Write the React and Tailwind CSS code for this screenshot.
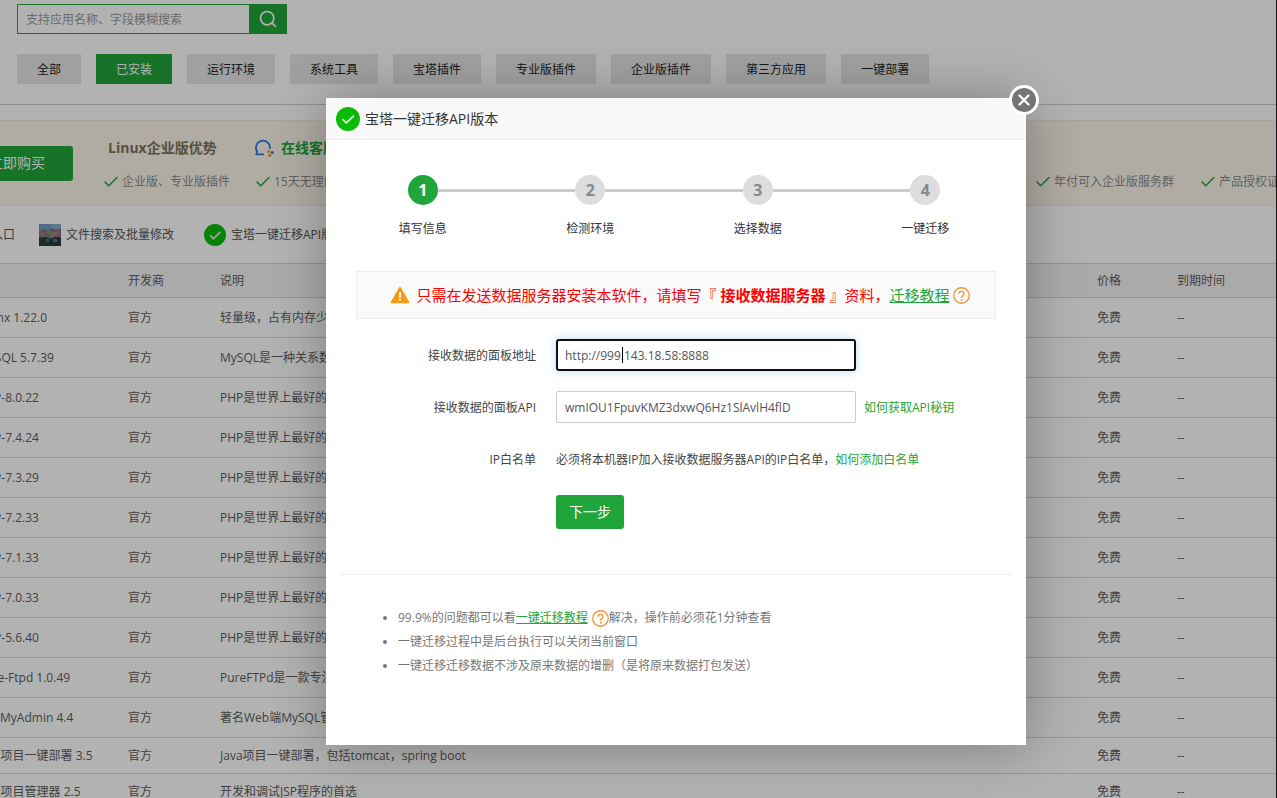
import { Check, Search, X } from "lucide-react";

const tabs = [
  "全部",
  "已安装",
  "运行环境",
  "系统工具",
  "宝塔插件",
  "专业版插件",
  "企业版插件",
  "第三方应用",
  "一键部署",
];

const php = "PHP是世界上最好的编程语言";

const apps = [
  { name: "Nginx 1.22.0", desc: "轻量级，占有内存少，并发能力强" },
  { name: "MySQL 5.7.39", desc: "MySQL是一种关系数据库管理系统" },
  { name: "PHP-8.0.22", desc: php },
  { name: "PHP-7.4.24", desc: php },
  { name: "PHP-7.3.29", desc: php },
  { name: "PHP-7.2.33", desc: php },
  { name: "PHP-7.1.33", desc: php },
  { name: "PHP-7.0.33", desc: php },
  { name: "PHP-5.6.40", desc: php },
  { name: "Pure-Ftpd 1.0.49", desc: "PureFTPd是一款专注于程序健壮的软件" },
  { name: "phpMyAdmin 4.4", desc: "著名Web端MySQL管理工具" },
  { name: "Java项目一键部署 3.5", desc: "Java项目一键部署，包括tomcat，spring boot", compact: true },
  { name: "Java项目管理器 2.5", desc: "开发和调试JSP程序的首选", compact: true },
];

const steps = ["填写信息", "检测环境", "选择数据", "一键迁移"];

function GreenCheck({ className }) {
  return (
    <svg viewBox="0 0 24 24" className={className} aria-hidden="true">
      <circle cx="12" cy="12" r="12" fill="#09bb07" />
      <path d="M6.500 12.200l3.800 3.800 7.600-7.400" fill="none" stroke="#d5f3d5" strokeWidth="1.9" />
    </svg>
  );
}

function PhotoIcon() {
  return (
    <svg viewBox="0 0 22 22" className="size-[22px] shrink-0" aria-hidden="true">
      <rect width="22" height="22" fill="#4a6272" />
      <rect width="22" height="7" fill="#6f9cc4" />
      <rect x="12" width="10" height="5" fill="#86add0" />
      <path d="M0 7l5-2 4 2 3-3 5 2 5-2v9H0z" fill="#7d7088" />
      <rect x="1" y="8" width="5" height="3" fill="#a0787c" />
      <rect x="8" y="7" width="4" height="3" fill="#71a46a" />
      <rect x="13" y="8" width="5" height="3" fill="#b08a6c" />
      <rect x="18" y="6" width="3" height="5" fill="#a3719a" />
      <rect x="3" y="11" width="4" height="3" fill="#6a8a90" />
      <rect x="11" y="11" width="4" height="3" fill="#86995c" />
      <path d="M0 14l6-1 5 2 5-2 6 1v8H0z" fill="#2a3c3a" />
      <rect x="7" y="15" width="3" height="3" fill="#4c6f68" />
      <rect x="14" y="15" width="4" height="3" fill="#53708c" />
    </svg>
  );
}

function ServiceIcon() {
  return (
    <svg viewBox="0 0 20 18" className="h-[18px] w-5 shrink-0" aria-hidden="true">
      <path
        d="M10 15.4H2.2l1-2.6A7 7 0 1 1 15.8 10"
        fill="none"
        stroke="#2a7de1"
        strokeWidth="1.7"
        strokeLinejoin="round"
      />
      <circle cx="14.6" cy="12.600" r="1.500" fill="#f0a020" />
      <circle cx="18.200" cy="13.400" r="1.500" fill="#2a7de1" />
      <circle cx="15.800" cy="16.200" r="1.500" fill="#f08a24" />
    </svg>
  );
}

function WarningIcon() {
  return (
    <svg viewBox="0 0 20 18" className="mr-[7px] h-[18px] w-5 shrink-0" aria-hidden="true">
      <path
        d="M10 1.6L18.6 16.4H1.4z"
        fill="#f39c12"
        stroke="#f39c12"
        strokeWidth="1.6"
        strokeLinejoin="round"
      />
      <path d="M10 6.400v5" stroke="#fff" strokeWidth="2" />
      <circle cx="10" cy="13.900" r="1.100" fill="#fff" />
    </svg>
  );
}

function HelpIcon({ className }) {
  return (
    <svg viewBox="0 0 16 16" className={className} aria-hidden="true">
      <circle cx="8" cy="8" r="7.3" fill="none" stroke="#f59331" strokeWidth="1.2" />
      <path
        d="M5.700 6.400a2.300 2.300 0 1 1 3.500 2C8.400 8.900 8 9.300 8 10.100"
        fill="none"
        stroke="#f59331"
        strokeWidth="1.3"
      />
      <circle cx="8" cy="12" r="0.9" fill="#f59331" />
    </svg>
  );
}

function Feature({ children }) {
  return (
    <span className="-ml-[3px] flex items-center gap-0.5 text-xs whitespace-nowrap text-[#8a8a8a]">
      <Check className="size-[18px] text-[#20a53a]" strokeWidth={2} />
      {children}
    </span>
  );
}

function StorePage() {
  return (
    <div>
      <div className="border-b border-[#ccc] px-[17px] pt-1 pb-5">
        <form className="flex h-[30px]" onSubmit={(e) => e.preventDefault()}>
          <input
            type="text"
            aria-label="搜索应用"
            placeholder="支持应用名称、字段模糊搜索"
            className="w-[232px] border border-r-0 border-[#20a53a] bg-white px-2 pt-px text-xs placeholder:text-[#999]"
          />
          <button
            type="submit"
            aria-label="搜索"
            className="grid w-[38px] place-items-center bg-[#20a53a] text-white"
          >
            <Search size={20} strokeWidth={2} />
          </button>
        </form>

        <div className="mt-5 flex gap-[15px]">
          {tabs.map((tab) => (
            <button
              key={tab}
              type="button"
              className={`h-[30px] shrink-0 px-5 pt-0.5 text-xs ${
                tab === "已安装" ? "bg-[#20a53a] text-white" : "bg-[#e6e6e6] text-[#222]"
              }`}
            >
              {tab}
            </button>
          ))}
        </div>
      </div>

      <div className="mt-[15px] flex h-[86px] items-center overflow-hidden border-y border-[#f2ebdc] bg-[#fcf7eb]">
        <button
          type="button"
          className="-ml-[39px] h-[35px] w-28 shrink-0 rounded-[3px] bg-[#20a53a] text-sm text-white"
        >
          立即购买
        </button>
        <div className="mt-[3px] ml-8 grid grid-cols-[152px_auto] gap-y-[15px]">
          <span className="pl-[3px] text-sm/5 font-bold text-[#80715a]">Linux企业版优势</span>
          <a
            href="#service"
            className="-ml-[3px] flex items-center gap-[7px] text-sm/5 font-bold whitespace-nowrap text-[#20a53a]"
          >
            <ServiceIcon />
            在线客服
          </a>
          <Feature>企业版、专业版插件</Feature>
          <Feature>15天无理由退款</Feature>
        </div>
        <div className="mt-[38px] ml-auto flex w-[239px] shrink-0 gap-7">
          <Feature>年付可入企业版服务群</Feature>
          <Feature>产品授权证书</Feature>
        </div>
      </div>

      <div className="-ml-[9px] flex h-[57px] items-center text-xs text-[#555]">
        <a href="#entry" className="mr-6">入口</a>
        <a href="#search" className="mr-[30px] flex items-center gap-[5px]">
          <PhotoIcon />
          文件搜索及批量修改
        </a>
        <a href="#migrate" className="flex items-center gap-[5px]">
          <GreenCheck className="size-[22px]" />
          宝塔一键迁移API版本
        </a>
      </div>

      <div className="-ml-[33px]">
        <table className="w-full table-fixed border-t border-[#d5d5d5] text-left text-xs text-[#5c5c5c]">
          <colgroup>
            <col className="w-[153px]" />
            <col className="w-[92px]" />
            <col />
            <col className="w-20" />
            <col className="w-[107px]" />
          </colgroup>
          <thead>
            <tr className="h-[34px] border-b border-[#d5d5d5] bg-[#f4f4f4]">
              <th className="px-2 font-normal">名称</th>
              <th className="px-2 font-normal">开发商</th>
              <th className="px-2 font-normal">说明</th>
              <th className="px-2 font-normal">价格</th>
              <th className="px-2 font-normal">到期时间</th>
            </tr>
          </thead>
          <tbody>
            {apps.map((app) => (
              <tr
                key={app.name}
                className={`border-b border-[#d5d5d5] ${app.compact ? "h-9" : "h-10"}`}
              >
                <td className="pr-2 pl-[11px] whitespace-nowrap">{app.name}</td>
                <td className="px-2">官方</td>
                <td className="truncate px-2">{app.desc}</td>
                <td className="px-2">免费</td>
                <td className="px-2">--</td>
              </tr>
            ))}
          </tbody>
        </table>
      </div>
    </div>
  );
}

function Steps() {
  return (
    <ol className="grid grid-cols-4 pt-[35px] pr-[17px] pl-[13px]">
      {steps.map((label, i) => (
        <li key={label} className="flex flex-col items-center">
          <div className="flex w-full items-center">
            <span className={`h-[3px] flex-1 ${i > 0 ? "bg-[#ccc]" : ""}`} />
            <span
              className={`grid size-[30px] place-items-center rounded-full text-base font-bold ${
                i === 0 ? "bg-[#20a53a] text-white" : "bg-[#ddd] text-[#888]"
              }`}
            >
              {i + 1}
            </span>
            <span className={`h-[3px] flex-1 ${i < steps.length - 1 ? "bg-[#ccc]" : ""}`} />
          </div>
          <span className="mt-[15px] text-xs/[18px] text-[#333]">{label}</span>
        </li>
      ))}
    </ol>
  );
}

function MigrateDialog() {
  return (
    <div
      role="dialog"
      aria-label="宝塔一键迁移API版本"
      className="relative w-[700px] max-w-full bg-white text-[#444] shadow-[1px_1px_50px_rgba(0,0,0,0.3)]"
    >
      <button
        type="button"
        aria-label="关闭"
        className="absolute -top-[13px] -right-[13px] grid size-[30px] place-items-center rounded-full border-3 border-white bg-[#757575] text-white"
      >
        <X size={18} strokeWidth={3} />
      </button>

      <div className="flex h-[42px] items-center gap-[5px] border-b border-[#eee] bg-[#f8f8f8] px-[10px] text-sm text-[#333]">
        <GreenCheck className="size-6" />
        宝塔一键迁移API版本
      </div>

      <Steps />

      <div className="mx-[30px] mt-[33px] flex h-12 items-center justify-center border border-[#eee] bg-[#fafafa] pl-2 text-[15px] whitespace-nowrap text-[#f00]">
        <WarningIcon />
        <span>
          只需在发送数据服务器安装本软件，请填写『 <b>接收数据服务器</b> 』资料，
          <a href="#guide" className="text-[#20a53a] underline">迁移教程</a>
        </span>
        <HelpIcon className="ml-1 size-[17px]" />
      </div>

      <form className="mt-5 space-y-5 text-xs" onSubmit={(e) => e.preventDefault()}>
        <div className="flex h-8 items-center">
          <label htmlFor="panel-url" className="mr-5 w-[210px] pt-0.5 text-right">
            接收数据的面板地址
          </label>
          <div className="relative">
            <input
              id="panel-url"
              type="text"
              defaultValue="http://999.143.18.58:8888"
              className="h-8 w-[300px] rounded-[3px] border-2 border-[#101010] px-[7px] text-[#555] shadow-[0_0_8px_rgba(102,175,233,0.5)] outline-none"
            />
            <span className="absolute top-2 left-[66px] h-4 w-px bg-black" />
          </div>
        </div>
        <div className="flex h-8 items-center">
          <label htmlFor="panel-api" className="mr-5 w-[210px] pt-0.5 text-right">
            接收数据的面板API
          </label>
          <input
            id="panel-api"
            type="text"
            defaultValue="wmIOU1FpuvKMZ3dxwQ6Hz1SlAvlH4flD"
            className="h-8 w-[300px] rounded-[2px] border border-[#ccc] px-2 text-[#555]"
          />
          <a href="#api-key" className="ml-2 pt-0.5 text-[#20a53a]">如何获取API秘钥</a>
        </div>
        <div className="flex h-8 items-center">
          <span className="mr-5 w-[210px] pt-0.5 text-right">IP白名单</span>
          <span className="pt-0.5">
            必须将本机器IP加入接收数据服务器API的IP白名单，
            <a href="#whitelist" className="text-[#20a53a]">如何添加白名单</a>
          </span>
        </div>
        <button
          type="submit"
          className="ml-[230px] block h-[34px] rounded-[3px] bg-[#20a53a] px-[13px] text-sm text-white"
        >
          下一步
        </button>
      </form>

      <ul className="mx-[15px] mt-[45px] list-disc border-t border-[#eee] pt-[31px] pb-[67px] pl-[57px] text-xs/6 text-[#777]">
        <li>
          99.9%的问题都可以看
          <a href="#guide" className="text-[#20a53a] underline">一键迁移教程</a>
          <HelpIcon className="ml-1 inline size-[17px]" />
          解决，操作前必须花1分钟查看
        </li>
        <li>一键迁移过程中是后台执行可以关闭当前窗口</li>
        <li>一键迁移迁移数据不涉及原来数据的增删（是将原来数据打包发送）</li>
      </ul>
    </div>
  );
}

export default function App() {
  return (
    <div className="relative h-screen overflow-hidden border-r border-[#111] bg-white font-['Open_Sans','Noto_Sans_CJK_SC',sans-serif]">
      <StorePage />
      <div className="absolute inset-0 flex items-center justify-center bg-black/30 pt-[45px] pl-[76px]">
        <MigrateDialog />
      </div>
    </div>
  );
}
